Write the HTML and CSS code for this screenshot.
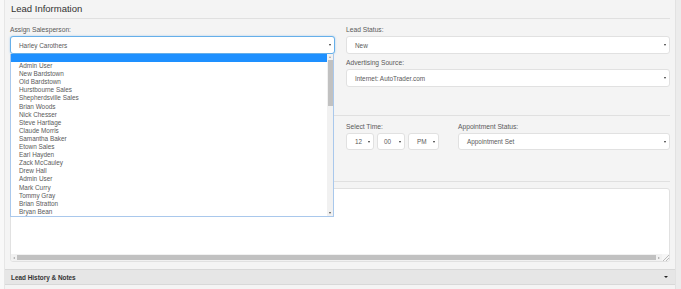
FILE: index.html
```html
<!DOCTYPE html>
<html>
<head>
<meta charset="utf-8">
<link rel="stylesheet" href="styles.css">
</head>
<body>
<div class="page">
  <div class="panel">
    <div class="panel-body">
      <div class="legend">Lead Information</div>
      <div class="grid top">
        <div class="col">
          <div class="group">
            <label class="lbl">Assign Salesperson:</label>
            <div class="dd">
              <div class="sel focus"><span>Harley Carothers</span><i class="caret"></i></div>
              <div class="list">
                <ul class="opts">
                  <li class="hl"></li>
                  <li>Admin User</li>
                  <li>New Bardstown</li>
                  <li>Old Bardstown</li>
                  <li>Hurstbourne Sales</li>
                  <li>Shepherdsville Sales</li>
                  <li>Brian Woods</li>
                  <li>Nick Chesser</li>
                  <li>Steve Hartlage</li>
                  <li>Claude Morris</li>
                  <li>Samantha Baker</li>
                  <li>Etown Sales</li>
                  <li>Earl Hayden</li>
                  <li>Zack McCauley</li>
                  <li>Drew Hall</li>
                  <li>Admin User</li>
                  <li>Mark Curry</li>
                  <li>Tommy Gray</li>
                  <li>Brian Stratton</li>
                  <li>Bryan Bean</li>
                </ul>
                <div class="vscroll">
                  <i class="arr-up"></i>
                  <div class="vthumb"></div>
                  <span class="vfill"></span>
                  <i class="arr-down"></i>
                </div>
              </div>
            </div>
          </div>
        </div>
        <div class="col">
          <div class="group">
            <label class="lbl">Lead Status:</label>
            <div class="sel"><span>New</span><i class="caret"></i></div>
          </div>
          <div class="group g2">
            <label class="lbl">Advertising Source:</label>
            <div class="sel"><span>Internet: AutoTrader.com</span><i class="caret"></i></div>
          </div>
        </div>
      </div>
      <hr class="sep sep1">
      <div class="grid mid">
        <div class="col"></div>
        <div class="col appt">
          <div class="group">
            <label class="lbl">Select Time:</label>
            <div class="times">
              <div class="sel sm s-hr"><span>12</span><i class="caret"></i></div>
              <div class="sel sm s-min"><span>00</span><i class="caret"></i></div>
              <div class="sel sm s-ap"><span>PM</span><i class="caret"></i></div>
            </div>
          </div>
          <div class="group">
            <label class="lbl">Appointment Status:</label>
            <div class="sel sm"><span>Appointment Set</span><i class="caret"></i></div>
          </div>
        </div>
      </div>
      <hr class="sep sep2">
      <div class="notes">
        <div class="notes-area"></div>
        <div class="hscroll">
          <i class="arr-left"></i>
          <div class="hthumb"></div>
          <i class="arr-right"></i>
          <span class="resizer"></span>
        </div>
      </div>
    </div>
    <div class="bar"><span>Lead History &amp; Notes</span><i class="bcaret"></i></div>
  </div>
  <div class="edge"></div>
</div>
</body>
</html>
```

FILE: styles.css
```css
* { box-sizing: border-box; }
html, body { margin: 0; padding: 0; }
body {
  font-family: "Liberation Sans", Arial, sans-serif;
  background: #f8f8f8;
  color: #555;
  width: 681px;
  height: 289px;
  overflow: hidden;
}
.page {
  display: flex;
  height: 289px;
  padding-left: 4px;
}
.panel {
  flex: 1;
  background: #f4f4f4;
  border-left: 1px solid #e6e6e6;
  border-right: 1px solid #e2e2e2;
  display: flex;
  flex-direction: column;
}
.edge {
  width: 5px;
  background: #ececec;
}
.panel-body {
  padding: 0 5px;
}
.legend {
  font-size: 9.5px;
  line-height: 12px;
  color: #333;
  padding: 3px 0 3px 1px;
  border-bottom: 1px solid #e0e0e0;
}
.grid {
  display: grid;
  grid-template-columns: 325px 1fr;
  column-gap: 11px;
}
.group {
  margin-top: 6px;
}
.group.g2 {
  margin-top: 4px;
}
.lbl {
  display: block;
  font-size: 6.7px;
  line-height: 10px;
  color: #5a5a5a;
  margin-bottom: 1px;
}
.sel {
  display: flex;
  align-items: center;
  justify-content: space-between;
  height: 18px;
  background: #fff;
  border: 1px solid #e1e1e1;
  border-radius: 3px;
  padding: 0 3px 0 8px;
  font-size: 6.4px;
  color: #5a5a5a;
}
.sel.focus {
  border-color: #66afe9;
  box-shadow: 0 0 2px rgba(102, 175, 233, 0.6);
  padding-right: 3px;
}
.sel.sm { height: 17px; }
.caret {
  display: block;
  width: 0;
  height: 0;
  border-left: 1.5px solid transparent;
  border-right: 1.5px solid transparent;
  border-top: 2px solid #333;
}
.dd { position: relative; }
.list {
  position: absolute;
  left: 0;
  top: 18px;
  width: 324px;
  height: 163px;
  background: #fff;
  border: 1px solid #a9c8ec;
  border-top: 0;
  display: flex;
  z-index: 5;
}
.opts {
  list-style: none;
  margin: 0;
  padding: 0;
  flex: 1;
  font-size: 6.4px;
  color: #5a5a5a;
}
.opts li {
  height: 8.1px;
  line-height: 8.1px;
  padding-left: 8px;
  white-space: nowrap;
}
.opts li.hl { background: #1e90ff; }
.vscroll {
  width: 6px;
  background: #f1f1f1;
  display: flex;
  flex-direction: column;
  align-items: center;
}
.arr-up, .arr-down {
  display: block;
  width: 0; height: 0;
  border-left: 1.5px solid transparent;
  border-right: 1.5px solid transparent;
  margin: 2px 0;
}
.arr-up { border-bottom: 2px solid #a3a3a3; }
.arr-down { border-top: 2px solid #505050; }
.vthumb {
  width: 5px;
  height: 46px;
  background: #c1c1c1;
}
.vfill { flex: 1; }
.sep {
  border: 0;
  border-top: 1px solid #e0e0e0;
  height: 0;
  margin: 0;
}
.sep1 { margin-top: 28px; }
.sep2 { margin-top: 31px; }
.appt {
  display: grid;
  grid-template-columns: 112px 1fr;
}
.times {
  display: flex;
  gap: 3px;
}
.s-hr { width: 28px; padding-left: 8px; }
.s-min { width: 28px; padding-left: 6px; }
.s-ap { width: 31px; padding-left: 8px; }
.notes {
  margin-top: 6px;
  height: 74px;
  background: #fff;
  border: 1px solid #e1e1e1;
  border-radius: 3px;
  display: flex;
  flex-direction: column;
  overflow: hidden;
}
.notes-area { flex: 1; }
.hscroll {
  height: 7px;
  display: flex;
  align-items: center;
  background: #f1f1f1;
}
.arr-left, .arr-right {
  display: block;
  width: 0; height: 0;
  border-top: 1.5px solid transparent;
  border-bottom: 1.5px solid transparent;
  margin: 0 2px;
}
.arr-left { border-right: 2px solid #a3a3a3; }
.arr-right { border-left: 2px solid #a3a3a3; }
.hthumb {
  flex: 1;
  height: 5px;
  background: #c1c1c1;
}
.resizer {
  width: 7px;
  height: 7px;
  background: linear-gradient(135deg, transparent 55%, #bbb 55%, #bbb 62%, transparent 62%, transparent 75%, #bbb 75%, #bbb 82%, transparent 82%);
  background-color: #f6f6f6;
}
.bar {
  margin-top: 7px;
  height: 16px;
  background: #e6e6e6;
  border-top: 1px solid #d8d8d8;
  border-bottom: 1px solid #d8d8d8;
  display: flex;
  align-items: center;
  justify-content: space-between;
  padding: 0 7px 0 6px;
  font-size: 6.4px;
  font-weight: bold;
  color: #333;
}
.bcaret {
  display: block;
  width: 0; height: 0;
  border-left: 2px solid transparent;
  border-right: 2px solid transparent;
  border-top: 2.5px solid #222;
}
```
